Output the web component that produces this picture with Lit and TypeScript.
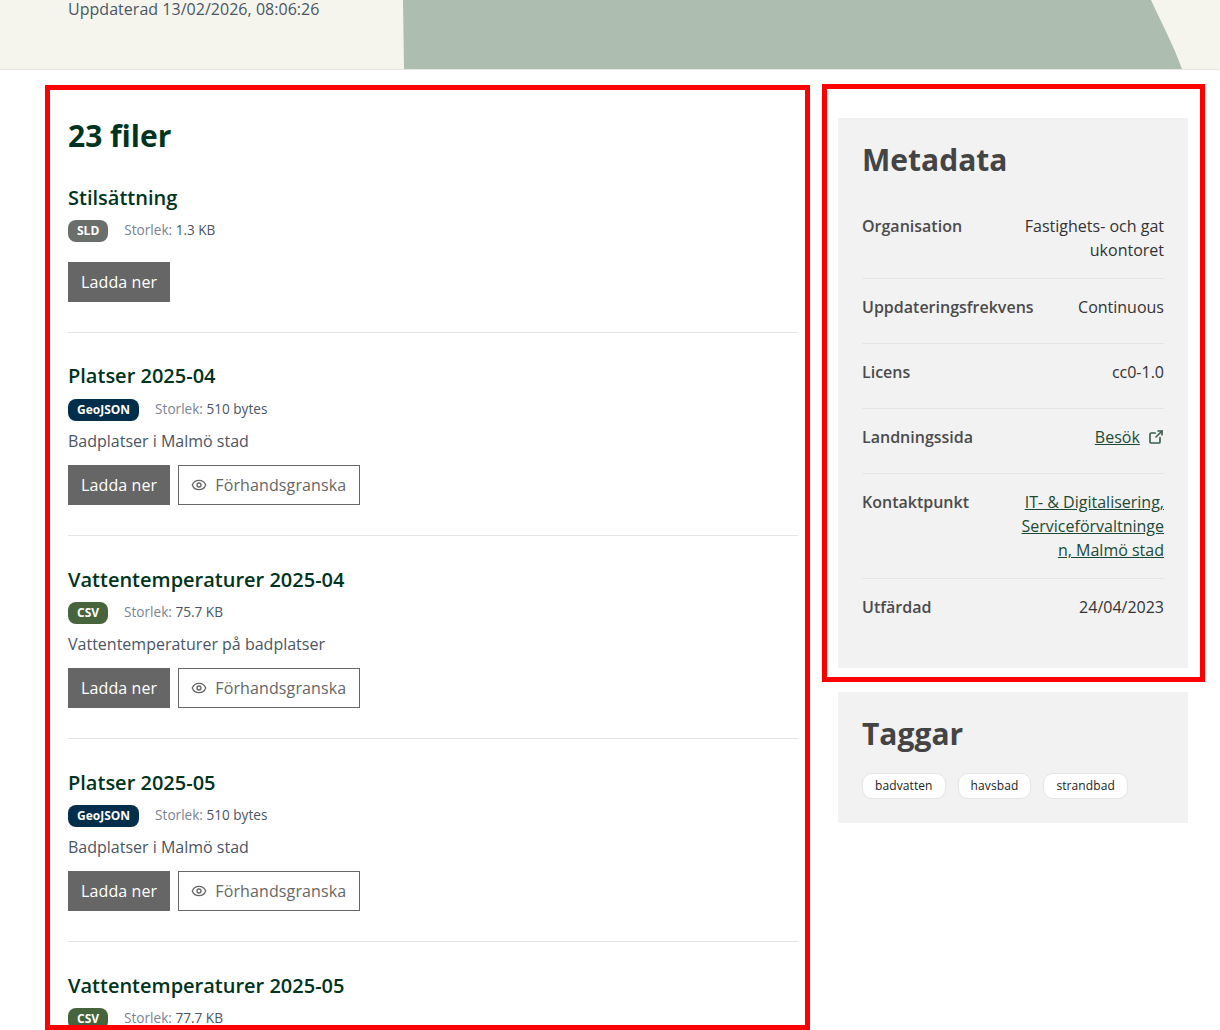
import { LitElement, html, css, nothing } from 'lit'
import { customElement } from 'lit/decorators.js'

type DataFile = { title: string; format: string; size: string; desc?: string }

const files: DataFile[] = [
    { title: 'Stilsättning', format: 'SLD', size: '1.3 KB' },
    { title: 'Platser 2025-04', format: 'GeoJSON', size: '510 bytes', desc: 'Badplatser i Malmö stad' },
    { title: 'Vattentemperaturer 2025-04', format: 'CSV', size: '75.7 KB', desc: 'Vattentemperaturer på badplatser' },
    { title: 'Platser 2025-05', format: 'GeoJSON', size: '510 bytes', desc: 'Badplatser i Malmö stad' },
    { title: 'Vattentemperaturer 2025-05', format: 'CSV', size: '77.7 KB', desc: 'Vattentemperaturer på badplatser' },
]

const tags = ['badvatten', 'havsbad', 'strandbad']

const eyeIcon = html`<svg class="eye" viewBox="0 0 24 24" fill="none" stroke="currentColor" stroke-width="2" stroke-linecap="round" stroke-linejoin="round">
    <path d="M2.06 12.35a1 1 0 0 1 0-.7 10.75 10.75 0 0 1 19.88 0 1 1 0 0 1 0 .7 10.75 10.75 0 0 1-19.88 0" />
    <circle cx="12" cy="12" r="3" />
</svg>`

const externalIcon = html`<svg class="ext" viewBox="0 0 24 24" fill="none" stroke="currentColor" stroke-width="2.5" stroke-linecap="round" stroke-linejoin="round">
    <path d="M18 13v6a2 2 0 0 1-2 2H5a2 2 0 0 1-2-2V8a2 2 0 0 1 2-2h6" />
    <path d="m21 3-9 9" />
    <path d="M15 3h6v6" />
</svg>`

@customElement('app-root')
export class AppRoot extends LitElement {
    static styles = css`
        :host {
            display: block;
            position: relative;
            height: 1030px;
            overflow: hidden;
            background: #fff;
            font-family: 'Open Sans', 'Noto Sans', sans-serif;
            font-size: 16px;
            line-height: 24px;
            color: #333;
        }

        .hero {
            position: relative;
            height: 69px;
            overflow: hidden;
            box-sizing: border-box;
            padding-left: 68px;
            background: #f5f5ee;
        }

        .hero-shape {
            position: absolute;
            inset: 0;
            width: 1220px;
            height: 69px;
        }

        .updated {
            position: relative;
            margin: -3px 0 0;
            color: #4b5563;
            letter-spacing: 0.03px;
        }

        .main {
            display: flex;
            gap: 40px;
            padding: 48px 32px 0 68px;
            border-top: 1px solid #e5e5e5;
        }

        .files {
            width: 730px;
            flex: none;
        }

        h2 {
            margin: 0;
            font-size: 30px;
            line-height: 36px;
            font-weight: 700;
            color: #003420;
        }

        .file {
            padding: 29.8px 0;
            border-bottom: 1px solid #e5e5e5;
        }

        .file:first-of-type {
            padding: 30px 0 29.6px;
        }

        h3 {
            margin: 0 0 8.2px;
            font-size: 20px;
            line-height: 28px;
            font-weight: 600;
            color: #003420;
        }

        .file:first-of-type h3 {
            margin-bottom: 8px;
        }

        .meta {
            display: flex;
            align-items: flex-start;
            gap: 16px;
            margin-bottom: 8.4px;
            font-size: 13.6px;
            line-height: 20px;
            color: #4b5563;
        }

        .file:first-of-type .meta {
            margin-bottom: 8px;
        }

        .meta .label {
            color: #7b8494;
        }

        .badge {
            height: 22px;
            padding: 0 9px;
            border-radius: 8px;
            font-size: 12px;
            line-height: 21px;
            font-weight: 700;
            color: #fff;
        }

        .badge.sld {
            background: #6b6f6b;
        }

        .badge.geojson {
            background: #012e4a;
        }

        .badge.csv {
            background: #47643c;
        }

        .desc {
            margin: 0;
            padding-bottom: 12px;
            color: #4b5563;
        }

        .actions {
            display: flex;
            gap: 8px;
        }

        .btn {
            display: flex;
            align-items: center;
            box-sizing: border-box;
            height: 40px;
            padding: 0 13px;
            font-weight: 500;
            letter-spacing: 0.12px;
            text-decoration: none;
        }

        .btn.primary {
            background: #666;
            color: #fff;
        }

        .btn.outline {
            gap: 8px;
            padding: 0 13px 0 12px;
            border: 1px solid #666;
            color: #666;
        }

        .eye {
            width: 16px;
            height: 16px;
        }

        .side {
            display: flex;
            flex-direction: column;
            gap: 24px;
            width: 350px;
            flex: none;
        }

        .panel {
            padding: 24px;
            background: #f2f2f2;
        }

        .panel h2 {
            font-size: 30px;
            color: #444;
        }

        dl {
            margin: 20px 0 1px;
        }

        .row {
            display: flex;
            justify-content: space-between;
            padding: 16px 0;
            border-bottom: 1px solid #e5e5e5;
        }

        .row:last-child {
            border-bottom: none;
        }

        dt {
            min-height: 32px;
            font-weight: 600;
            color: #4b4b4b;
            white-space: nowrap;
        }

        dd {
            width: 148px;
            margin: 0;
            text-align: right;
            word-break: break-all;
        }

        a {
            color: #1c4a36;
            text-decoration: underline;
        }

        .ext {
            width: 16px;
            height: 16px;
            margin-left: 4px;
            vertical-align: -2px;
            color: #3a5f4d;
        }

        .tags {
            display: flex;
            gap: 12px;
            margin-top: 21px;
        }

        .tag {
            box-sizing: border-box;
            height: 26px;
            padding: 0 12px;
            border: 1px solid #e5e5e5;
            border-radius: 10px;
            background: #fff;
            font-size: 12px;
            line-height: 24px;
            letter-spacing: 0.1px;
            color: #222;
        }

        /* annotation frames drawn over the page */
        .frame {
            position: absolute;
            box-sizing: border-box;
            border: 5px solid #f00;
            pointer-events: none;
        }

        .frame.left {
            left: 45px;
            top: 85px;
            width: 765px;
            height: 945px;
        }

        .frame.right {
            left: 822px;
            top: 84px;
            width: 383px;
            height: 598px;
        }
    `

    renderFile(f: DataFile) {
        return html`<article class="file">
            <h3>${f.title}</h3>
            <div class="meta">
                <span class="badge ${f.format.toLowerCase()}">${f.format}</span>
                <span><span class="label">Storlek:</span> ${f.size}</span>
            </div>
            <p class="desc">${f.desc ?? nothing}</p>
            <div class="actions">
                <a class="btn primary">Ladda ner</a>
                ${f.desc ? html`<a class="btn outline">${eyeIcon}Förhandsgranska</a>` : nothing}
            </div>
        </article>`
    }

    render() {
        return html`
            <header class="hero">
                <svg class="hero-shape" viewBox="0 0 1220 69">
                    <path d="M403 0H1151C1160 20 1173 44 1182 69H404Z" fill="#adbdaf" />
                </svg>
                <p class="updated">Uppdaterad 13/02/2026, 08:06:26</p>
            </header>
            <div class="main">
                <section class="files">
                    <h2>23 filer</h2>
                    ${files.map((f) => this.renderFile(f))}
                </section>
                <aside class="side">
                    <section class="panel">
                        <h2>Metadata</h2>
                        <dl>
                            <div class="row"><dt>Organisation</dt><dd>Fastighets- och gatukontoret</dd></div>
                            <div class="row"><dt>Uppdateringsfrekvens</dt><dd>Continuous</dd></div>
                            <div class="row"><dt>Licens</dt><dd>cc0-1.0</dd></div>
                            <div class="row"><dt>Landningssida</dt><dd><a>Besök</a> ${externalIcon}</dd></div>
                            <div class="row"><dt>Kontaktpunkt</dt><dd><a>IT- &amp; Digitalisering, Serviceförvaltningen, Malmö stad</a></dd></div>
                            <div class="row"><dt>Utfärdad</dt><dd>24/04/2023</dd></div>
                        </dl>
                    </section>
                    <section class="panel">
                        <h2>Taggar</h2>
                        <div class="tags">${tags.map((t) => html`<span class="tag">${t}</span>`)}</div>
                    </section>
                </aside>
            </div>
            <div class="frame left"></div>
            <div class="frame right"></div>
        `
    }
}
